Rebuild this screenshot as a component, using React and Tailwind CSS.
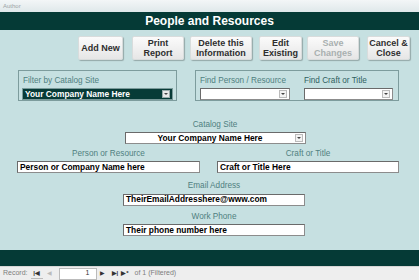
import React from 'react';

const font = { fontFamily: '"Liberation Sans", Arial, sans-serif' };

function Btn({ children, w, disabled }) {
  return (
    <div
      className={`h-[24px] flex items-center justify-center text-center leading-[10px] text-[9px] font-bold rounded-[2px] border border-[#d8dcdc] shadow-[1px_1px_1px_rgba(0,0,0,0.25)] bg-gradient-to-b from-[#fbfbfb] to-[#e6e6e6] ${disabled ? 'text-[#a9b0b0]' : 'text-[#2e2e2e]'} ${w}`}
    >
      {children}
    </div>
  );
}

function Arrow({ dark }) {
  return (
    <div className={`w-[8px] h-[8px] mr-[2px] flex items-center justify-center border ${dark ? 'border-[#9aa] bg-[#e8e8e8]' : 'border-[#bbb] bg-[#f3f3f3]'}`}>
      <div className="w-0 h-0 border-l-[2px] border-r-[2px] border-t-[2px] border-l-transparent border-r-transparent border-t-[#444]" />
    </div>
  );
}

function Field({ children, w, center, select }) {
  return (
    <div className={`h-[12px] bg-white border border-[#8c8c8c] border-t-[#6a6a6a] border-l-[#6a6a6a] flex items-center ${w}`}>
      <span className={`flex-1 text-[8.4px] font-bold text-black leading-none px-[2px] ${center ? 'text-center' : ''}`}>{children}</span>
      {select && <Arrow />}
    </div>
  );
}

function Label({ children }) {
  return <div className="text-[8.2px] text-[#4f7f80] leading-none text-center">{children}</div>;
}

export default function App() {
  return (
    <div className="w-[419px] h-[280px] overflow-hidden flex flex-col bg-[#c6e0e1]" style={font}>
      <div className="h-[12px] bg-gradient-to-b from-[#f3f6f7] to-[#dfe8ea] text-[6px] text-[#9aa4a6] pl-[3px] flex items-center">Author</div>
      <div className="h-[18px] bg-[#053a36] flex items-center justify-center text-white font-bold text-[12px]">
        People and Resources
      </div>

      <div className="h-[220px] flex flex-col">
        <div className="flex mt-[6px] pl-[78px]">
          <Btn w="w-[45px]">Add New</Btn>
          <div className="ml-[9px]"><Btn w="w-[52px]">Print<br />Report</Btn></div>
          <div className="ml-[6px]"><Btn w="w-[62px]">Delete this<br />Information</Btn></div>
          <div className="ml-[7px]"><Btn w="w-[43px]">Edit<br />Existing</Btn></div>
          <div className="ml-[5px]"><Btn w="w-[52px]" disabled>Save<br />Changes</Btn></div>
          <div className="ml-[8px]"><Btn w="w-[43px]">Cancel &amp;<br />Close</Btn></div>
        </div>

        <div className="flex mt-[10px] pl-[18px]">
          <div className="w-[159px] h-[31px] border border-[#7d9c9d] px-[3px] pt-[6px]">
            <div className="text-[8.2px] text-[#4f7f80] leading-none pl-[1px]">Filter by Catalog Site</div>
            <div className="mt-[3px] h-[12px] bg-[#073b37] border border-[#7a9a9a] flex items-center">
              <span className="flex-1 text-white text-[8.4px] font-bold leading-none pl-[2px]">Your Company Name Here</span>
              <Arrow dark />
            </div>
          </div>
          <div className="ml-[18px] w-[204px] h-[31px] border border-[#7d9c9d] pl-[4px] pt-[6px] flex gap-[14px]">
            <div>
              <div className="text-[8.2px] text-[#4f7f80] leading-none">Find Person / Resource</div>
              <div className="mt-[3px]"><Field w="w-[90px]" select /></div>
            </div>
            <div>
              <div className="text-[8.2px] text-[#2f5f60] leading-none">Find Craft or Title</div>
              <div className="mt-[3px]"><Field w="w-[89px]" select /></div>
            </div>
          </div>
        </div>

        <div className="flex flex-col items-center mt-[20px] pl-[11px]">
          <Label>Catalog Site</Label>
          <div className="mt-[3px]"><Field w="w-[181px]" center select>Your Company Name Here</Field></div>
        </div>

        <div className="flex mt-[6px] pl-[17px] gap-[17px]">
          <div className="flex flex-col items-center">
            <Label>Person or Resource</Label>
            <div className="mt-[3px]"><Field w="w-[183px]">Person or Company Name here</Field></div>
          </div>
          <div className="flex flex-col items-center">
            <Label>Craft or Title</Label>
            <div className="mt-[3px]"><Field w="w-[182px]">Craft or Title Here</Field></div>
          </div>
        </div>

        <div className="flex flex-col items-center mt-[9px] pl-[9px]">
          <Label>Email Address</Label>
          <div className="mt-[3px]"><Field w="w-[182px]">TheirEmailAddresshere@www.com</Field></div>
          <div className="mt-[7px]"><Label>Work Phone</Label></div>
          <div className="mt-[3px]"><Field w="w-[182px]">Their phone number here</Field></div>
        </div>
      </div>

      <div className="h-[16px] bg-[#053a36]" />
      <div className="flex-1 bg-[#eeeeee] border-t border-[#d6d6d6] flex items-center text-[7px] text-[#7d7d7d] pl-[3px]">
        <span>Record:</span>
        <span className="ml-[3px] w-[12px] h-[11px] flex items-center justify-center border-b border-[#bbb] text-[#333] font-bold text-[6px]">|◀</span>
        <span className="ml-[3px] w-[8px] h-[11px] flex items-center justify-center text-[6px] text-[#bbb]">◀</span>
        <div className="ml-[5px] w-[38px] h-[12px] bg-white border border-[#bbb] flex items-center justify-end pr-[6px] text-[#333]">1</div>
        <span className="ml-[3px] text-[6px] text-[#333]">▶</span>
        <span className="ml-[7px] text-[6px] text-[#333] font-bold">▶|</span>
        <span className="ml-[3px] text-[6px] text-[#333] font-bold">▶*</span>
        <span className="ml-[6px]">of 1 (Filtered)</span>
      </div>
    </div>
  );
}
